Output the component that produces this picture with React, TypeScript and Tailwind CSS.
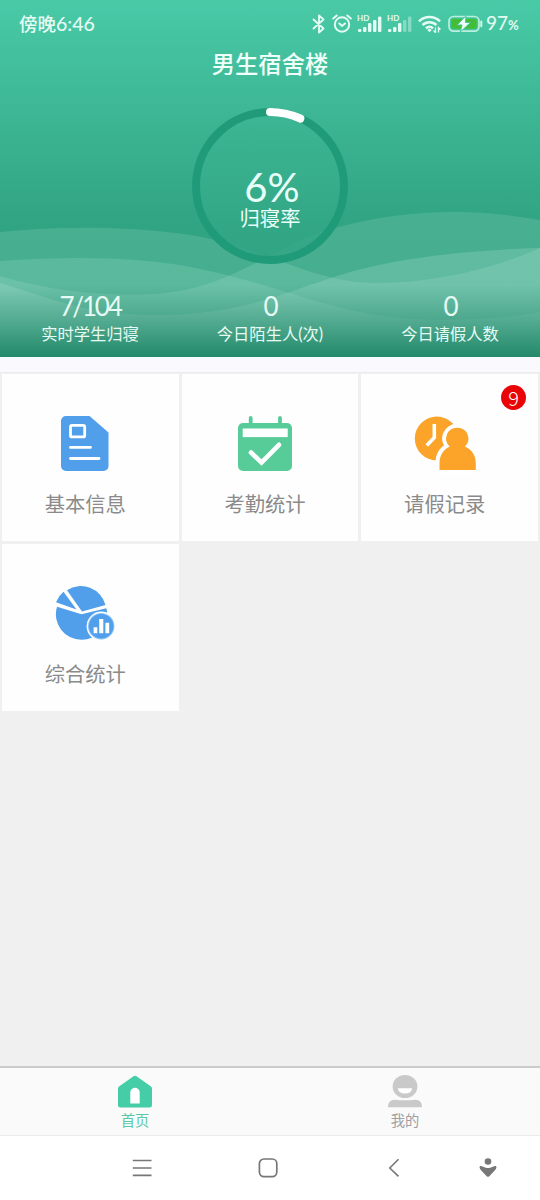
import React from 'react';

interface Stat {
    value: string;
    label: string;
}

interface MenuItem {
    label: string;
    icon: React.ReactNode;
    badge?: number;
}

const RING_RADIUS = 74;
const RING_LENGTH = 2 * Math.PI * RING_RADIUS;

const stats: Stat[] = [
    { value: '7/104', label: '实时学生归寝' },
    { value: '0', label: '今日陌生人(次)' },
    { value: '0', label: '今日请假人数' },
];

const InfoIcon = () => (
    <svg width="62" height="62" viewBox="0 0 62 62" fill="none">
        <path d="M12 4h23.500L54.500 20.500V54a5 5 0 0 1-5 5h-37.500a5 5 0 0 1-5-5V9a5 5 0 0 1 5-5z" fill="#519eea" />
        <rect x="16.500" y="13.300" width="14.200" height="11.600" rx="1.500" stroke="#fff" strokeWidth="2.800" />
        <path d="M16.500 35.400h20M16.500 46.500h28.500" stroke="#fff" strokeWidth="2.800" strokeLinecap="round" />
    </svg>
);

const AttendanceIcon = () => (
    <svg width="62" height="62" viewBox="0 0 62 62" fill="none">
        <path d="M16.700 6v9M46 6v9" stroke="#58cc98" strokeWidth="3.800" strokeLinecap="round" />
        <rect x="4" y="11" width="54" height="48" rx="5" fill="#58cc98" />
        <rect x="8.700" y="16.500" width="45" height="8.600" fill="#fff" />
        <path d="M17 40.500l10.500 10L45 32.800" stroke="#fff" strokeWidth="4.600" strokeLinecap="round" />
    </svg>
);

const LeaveIcon = () => (
    <svg width="62" height="62" viewBox="0 0 62 62" fill="none">
        <circle cx="22.800" cy="26.500" r="22" fill="#fca429" />
        <path d="M20.300 12v13.500l-7.500 8" stroke="#fff" strokeWidth="3.600" />
        <path
            d="M43.200 15.700a10.800 10.800 0 0 1 7.600 18.800c7 3 11 8.900 11 16.500v7H25.500V51c0-7.600 4-13.500 10.200-16.500a10.800 10.800 0 0 1 7.500-18.800z"
            fill="#fff"
            stroke="#fff"
            strokeWidth="8"
        />
        <path
            d="M43.200 15.700a10.800 10.800 0 0 1 7.600 18.800c7 3 11 8.900 11 16.500v7H25.500V51c0-7.600 4-13.500 10.200-16.500a10.800 10.800 0 0 1 7.500-18.800z"
            fill="#fca429"
        />
    </svg>
);

const SummaryIcon = () => (
    <svg width="62" height="62" viewBox="0 0 62 62" fill="none">
        <path d="M27.500 32.300L3 24.800A25.500 25.500 0 0 0 27.500 57.800 25.500 25.500 0 0 0 53 29l-.7-2.700z" fill="#519eea" />
        <path d="M28 29.500L13 8.200A25.500 25.500 0 0 1 51.500 23z" fill="#519eea" />
        <path d="M22.500 27.500L9.500 9.800A25.500 25.500 0 0 0 2 20.200z" fill="#519eea" />
        <circle cx="47.200" cy="44.200" r="14.600" fill="#fff" />
        <circle cx="47.200" cy="44.200" r="13.200" fill="#8bc4f7" />
        <circle cx="47.200" cy="44.200" r="12.200" fill="#519eea" />
        <path d="M39.600 45.300h3.700v6h-3.700zM45.200 37h4.100v14.300h-4.100zM51.400 40.800h3.800v10.500h-3.800z" fill="#fff" />
    </svg>
);

const menuItems: MenuItem[] = [
    { label: '基本信息', icon: <InfoIcon /> },
    { label: '考勤统计', icon: <AttendanceIcon /> },
    { label: '请假记录', icon: <LeaveIcon />, badge: 9 },
    { label: '综合统计', icon: <SummaryIcon /> },
];

const SignalIcon = ({ level }: { level: number }) => (
    <div className="relative h-[18px] w-[25px]">
        <span className="absolute -top-px left-0 font-['Lato'] text-[8px] leading-[9px] font-bold">HD</span>
        <svg className="absolute inset-0" width="25" height="18" viewBox="0 0 25 18" fill="currentColor">
            {[3, 5, 9, 12, 15.5].map((h, i) => (
                <rect key={h} x={1 + i * 5} y={17 - h} width="3.4" height={h} rx="1.2" opacity={i < level ? 1 : 0.4} />
            ))}
        </svg>
    </div>
);

const StatusBar = () => (
    <div className="flex h-12 items-center pl-[19px] text-[#e4fbf3]">
        <span className="w-[293px] text-[18.5px] leading-6 font-medium">
            傍晚<span className="text-[19.5px]">6:46</span>
        </span>
        <svg width="14" height="20" viewBox="0 0 14 20" fill="none" stroke="currentColor" strokeWidth="1.9">
            <path d="M1.500 5.500l10 9L7 18.500V1.500l4.500 4-10 9" strokeLinejoin="round" strokeLinecap="round" />
        </svg>
        <svg className="ml-[6px]" width="20" height="20" viewBox="0 0 20 20" fill="none" stroke="currentColor" strokeWidth="2" strokeLinecap="round">
            <circle cx="10" cy="10.500" r="7.200" />
            <path d="M7.300 9.500l2.700 2.500 3-2.500M1.200 4.500l3.500-3M18.800 4.500l-3.500-3" />
        </svg>
        <div className="ml-[5px] flex gap-[5px]">
            <SignalIcon level={5} />
            <SignalIcon level={3} />
        </div>
        <svg className="ml-[6px]" width="24" height="18" viewBox="0 0 24 18" fill="none" stroke="currentColor" strokeWidth="2.5">
            <path d="M1 6.300a15 15 0 0 1 21 0M4.500 10a10 10 0 0 1 14 0M8 13.300a5 5 0 0 1 7 0" />
            <path d="M9.300 15a3 3 0 0 1 4.400 0l-2.200 2.300z" fill="currentColor" stroke="none" />
            <path d="M17.500 12.500v5l-2-2M20.500 17.500v-5l2 2" strokeWidth="1.300" />
        </svg>
        <svg className="ml-[6px]" width="36" height="18" viewBox="0 0 36 18" fill="none">
            <rect x="1" y="1.500" width="30" height="14.600" rx="4.500" stroke="#bcefdc" strokeWidth="1.700" />
            <rect x="3.300" y="3.800" width="25.400" height="10" rx="2.500" fill="#42bd35" />
            <path d="M33.300 6.500v4.800" stroke="#d5f7ec" strokeWidth="2" strokeLinecap="round" />
            <path d="M18 .8L9 10h5l-1.700 7L22.500 7.500h-5z" fill="#e9fff8" stroke="#46c3a0" strokeWidth="1" />
        </svg>
        <span className="ml-[2px] text-[19px] leading-6 font-medium">
            97<span className="text-[13px] font-bold">%</span>
        </span>
    </div>
);

const HeaderWaves = () => (
    <svg className="absolute inset-0" width="540" height="357" viewBox="0 0 540 357" fill="none">
        <defs>
            <linearGradient id="shade" x1="0" y1="285" x2="0" y2="357" gradientUnits="userSpaceOnUse">
                <stop offset="0" stopColor="#23896a" stopOpacity="0" />
                <stop offset=".5" stopColor="#23896a" stopOpacity=".48" />
                <stop offset="1" stopColor="#23896a" />
            </linearGradient>
        </defs>
        <g fill="#d8f5ec">
            <path fillOpacity=".14" d="M0 232C60 226 130 226 190 235C260 246 310 281 370 283C430 284 490 270 540 248V357H0z" />
            <path fillOpacity=".14" d="M0 276C60 294 120 297 165 293C240 284 270 246 335 228C400 210 470 207 540 220V357H0z" />
            <path fillOpacity=".14" d="M0 261C70 256 140 257 190 267C280 284 320 310 400 318C450 322 500 319 540 312V357H0z" />
            <path fillOpacity=".18" d="M0 283C45 296 80 314 150 315C240 316 280 294 340 275C400 257 470 250 540 248V357H0z" />
        </g>
        <rect y="285" width="540" height="72" fill="url(#shade)" />
    </svg>
);

const RateRing = ({ present, total }: { present: number; total: number }) => {
    const rate = present / total;

    return (
        <div className="relative mx-auto mt-[28px] h-[156px] w-[156px]">
            <div className="absolute inset-[6px] rounded-full bg-linear-to-b from-[#3cb694] to-[#30a483] opacity-80" />
            <svg className="absolute inset-0 -rotate-90" width="156" height="156" viewBox="0 0 156 156" fill="none">
                <circle cx="78" cy="78" r={RING_RADIUS} stroke="#209b79" strokeWidth="8" />
                <circle
                    cx="78"
                    cy="78"
                    r={RING_RADIUS}
                    stroke="#fff"
                    strokeWidth="8"
                    strokeLinecap="round"
                    strokeDasharray={`${RING_LENGTH * rate} ${RING_LENGTH}`}
                />
            </svg>
            <div className="relative flex flex-col items-center pt-[59px] text-[#e9fff9]">
                <span className="pl-[4px] text-[40px] leading-10">{Math.floor(rate * 100)}%</span>
                <span className="text-[20.3px] leading-[22px]">归寝率</span>
            </div>
        </div>
    );
};

const Header = () => (
    <header className="relative h-[357px] bg-linear-to-b from-[#49caa7] from-0% via-[#31a483] via-62% to-[#2da080] to-100%">
        <HeaderWaves />
        <div className="relative">
            <StatusBar />
            <h1 className="text-center text-[23.3px] leading-8 font-medium text-[#effff9]">男生宿舍楼</h1>
            <RateRing present={7} total={104} />
            <div className="mt-[28px] grid grid-cols-3 text-center text-[#e6fbf4]">
                {stats.map(s => (
                    <div key={s.label}>
                        <div className="text-[26px] leading-7 tracking-[-2.2px]">{s.value}</div>
                        <div className="text-[16.3px] leading-7">{s.label}</div>
                    </div>
                ))}
            </div>
        </div>
    </header>
);

const MenuCard = ({ item }: { item: MenuItem }) => (
    <div className="relative flex h-[167px] flex-col items-center bg-[#fefefe] pt-[38px] pr-[10px]">
        {item.icon}
        <span className="mt-[15px] text-[20.3px] leading-[30px] text-[#8a8a8a]">{item.label}</span>
        {item.badge && (
            <span className="absolute top-[11px] right-[12px] flex h-[25px] w-[25px] items-center justify-center rounded-full bg-[#e90505] font-['Noto_Sans_CJK_SC'] text-[20px] leading-none font-light text-white">
                {item.badge}
            </span>
        )}
    </div>
);

const TabBar = () => (
    <nav className="grid h-[70px] grid-cols-2 border-t-2 border-b border-t-[#cbcbcb] border-b-[#ececec] bg-[#fafafb]">
        <div className="flex flex-col items-center pt-[6px] text-[#58c9a2]">
            <svg width="36" height="35" viewBox="0 0 36 35" fill="none">
                <path d="M16.500 2.300q1.500-1 3 0L34 12.500q1 .8 1 2V31a2.500 2.500 0 0 1-2.500 2.500h-29A2.500 2.500 0 0 1 1 31V14.500q0-1.200 1-2z" fill="#45cda7" />
                <path d="M13.300 29.500v-11a4.700 4.700 0 0 1 9.400 0v11z" fill="#fff" />
            </svg>
            <span className="mt-[2px] text-[14.3px] leading-5">首页</span>
        </div>
        <div className="flex flex-col items-center pt-[6px] text-[#a0a0a0]">
            <svg width="36" height="35" viewBox="0 0 36 35" fill="none">
                <ellipse cx="18" cy="12.500" rx="12.400" ry="11.600" fill="#c9c9c9" />
                <path d="M10.800 14.300h14.400q-.7 5.200-7.200 5.200t-7.200-5.200z" fill="#fff" />
                <path d="M1 33.300q0-7.500 6.500-7.500 10.500 1 21 0 6.500 0 6.500 7.500z" fill="#c9c9c9" />
            </svg>
            <span className="mt-[2px] text-[14.3px] leading-5">我的</span>
        </div>
    </nav>
);

const SystemNav = () => (
    <div className="flex h-[64px] items-center bg-white pl-[132px] text-[#777]">
        <svg width="20" height="20" viewBox="0 0 20 20" fill="none" stroke="currentColor" strokeWidth="1.700">
            <path d="M.8 2.500h18.700M.8 10h18.700M.8 17.400h18.700" />
        </svg>
        <svg className="ml-[106px]" width="20" height="20" viewBox="0 0 20 20" fill="none" stroke="currentColor" strokeWidth="1.700">
            <rect x="1.400" y="1" width="17.400" height="17.600" rx="4.500" />
        </svg>
        <svg className="ml-[110px]" width="12" height="20" viewBox="0 0 12 20" fill="none" stroke="currentColor" strokeWidth="1.600">
            <path d="M10.500 1.300L1.800 10l8.700 8.300" />
        </svg>
        <svg className="ml-[79px]" width="18" height="20" viewBox="0 0 18 20" fill="currentColor">
            <circle cx="9" cy="3.500" r="3.300" />
            <path d="M.6 9.800C.2 8.300 1.400 7.700 2.800 8.200l4 1.500q2.200.7 4.400 0l4-1.500c1.400-.5 2.600.1 2.200 1.600-.5 1.600-1.800 2.900-3.100 4.200l-4 4.200q-1.300 1.200-2.600 0l-4-4.200C2.400 12.700 1.100 11.400.6 9.800z" />
        </svg>
    </div>
);

export default function App() {
    return (
        <div className="flex h-[1200px] w-[540px] flex-col overflow-hidden bg-[#f0f0f0] font-['Lato','Noto_Sans_CJK_SC',sans-serif]">
            <Header />
            <div className="h-[15px] bg-[#faf9fd]" />
            <main className="flex-1 border-t border-[#ececef]">
                <div className="grid grid-cols-3 gap-x-[3px] gap-y-[3px] px-[2px] pt-px">
                    {menuItems.map(item => (
                        <MenuCard key={item.label} item={item} />
                    ))}
                </div>
            </main>
            <TabBar />
            <SystemNav />
        </div>
    );
}
